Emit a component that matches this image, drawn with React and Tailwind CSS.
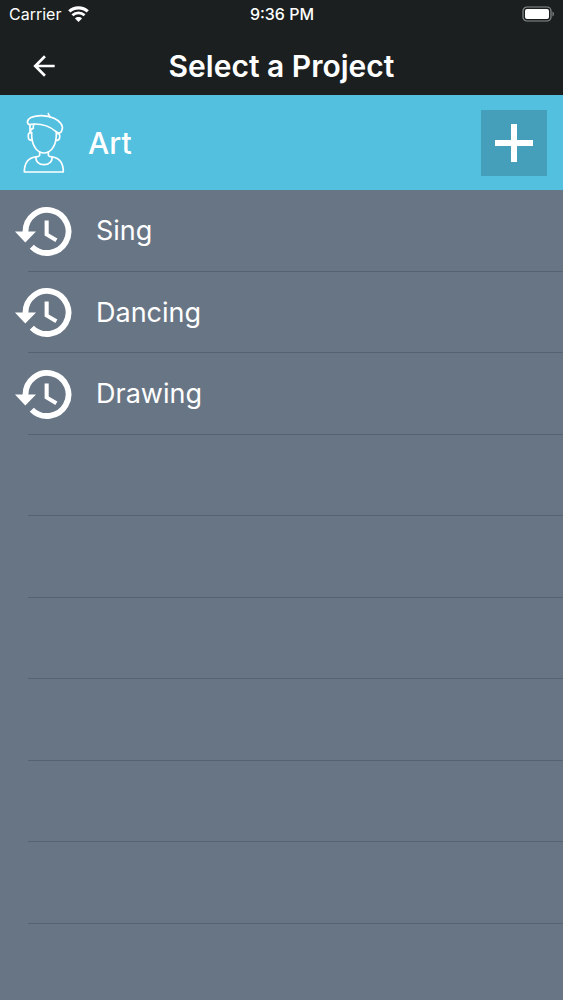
import { MdArrowBack } from "react-icons/md";

const slots = ["Sing", "Dancing", "Drawing", "", "", "", "", "", ""];

function WifiIcon() {
  return (
    <svg viewBox="0 0 66 50" className="h-4 w-[21px]" fill="none" stroke="white" aria-hidden="true">
      <path d="M4 17 C20 2 46 2 62 17" strokeWidth="10" />
      <path d="M14 29 C25 19 41 19 52 29" strokeWidth="9" />
      <path d="M33 50 L22 39 C28 33 38 33 44 39 Z" fill="white" stroke="none" />
    </svg>
  );
}

function BatteryIcon() {
  return (
    <svg viewBox="0 0 34 16" className="h-4 w-[34px]" aria-hidden="true">
      <rect x="2" y="1" width="28" height="14" rx="4" fill="none" stroke="#8b8f90" strokeWidth="1.2" />
      <rect x="4" y="3" width="24" height="10" rx="2" fill="white" />
      <path d="M31.500 5.500 C33.300 6.200 33.300 9.800 31.500 10.500 Z" fill="#8b8f90" />
    </svg>
  );
}

function HistoryIcon() {
  return (
    <svg viewBox="0 0 57 50" className="h-[50px] w-[57px]" aria-hidden="true">
      <path d="M10.500 26 V24.500 A21.500 21.500 0 1 1 16.800 39.700" fill="none" stroke="white" strokeWidth="5.800" />
      <path d="M0 24.500 H21 L10.300 35.500 Z" fill="white" />
      <path d="M29.600 13.500 H33.700 V26.400 L42.400 31.500 L40.400 34.900 L29.600 28.600 Z" fill="white" />
    </svg>
  );
}

function ArtistIcon() {
  return (
    <svg
      viewBox="0 0 162 210"
      className="h-[70px] w-[54px]"
      fill="none"
      stroke="white"
      strokeWidth="5"
      strokeLinecap="round"
      strokeLinejoin="round"
      aria-hidden="true"
    >
      <path d="M91 17 C92 21 94 24 97 27" />
      <path d="M31 49 C24 39 32 28 50 25 C70 21 91 23 108 31 C126 39 137 53 132 66 C130 76 121 78 113 70 C96 55 73 48 50 48 C40 48 34 51 31 49 Z" />
      <path d="M36 50 V73 M48 49 C45 54 45 58 46 61 C40 62 37 67 37 73" />
      <path d="M41 73 C40 95 44 111 54 123 C61 131 69 135 78 135 C87 135 95 131 102 123 C112 111 116 95 115 72" />
      <path d="M39 75 C32 73 30 78 31 86 C31 94 34 97 41 96" />
      <path d="M118 76 C125 77 126 82 125 89 C124 95 121 98 114 97" />
      <path d="M65 132 V141 C65 145 61 146 52 147 C31 150 19 163 19 192 H136 C136 163 124 150 103 147 C94 146 91 145 91 141 V132" />
      <path d="M53 147 C54 162 64 170 78 170 C92 170 102 162 103 147" />
    </svg>
  );
}

export default function App() {
  return (
    <div className="flex min-h-screen flex-col bg-[#687585] font-['Inter',sans-serif] text-white">
      <header className="bg-[#1b1f20]">
        <div className="grid h-7 grid-cols-3 items-center pr-2 pl-[9px] text-base">
          <div className="flex items-center gap-[7px]">
            <span>Carrier</span>
            <WifiIcon />
          </div>
          <span className="text-center font-medium">9:36 PM</span>
          <div className="flex justify-end">
            <BatteryIcon />
          </div>
        </div>
        <div className="grid h-[67px] grid-cols-[64px_1fr_64px] items-center pt-2">
          <button type="button" aria-label="Back" className="flex justify-end pr-1">
            <MdArrowBack className="size-8" />
          </button>
          <h1 className="text-center text-3xl font-semibold">Select a Project</h1>
        </div>
      </header>
      <section className="flex h-[95px] items-center bg-[#53c0df] pr-4 pl-[18px]">
        <ArtistIcon />
        <h2 className="ml-4 flex-1 text-3xl font-medium">Art</h2>
        <button type="button" aria-label="Add project" className="flex size-[66px] items-center justify-center bg-[#459fbb]">
          <svg viewBox="0 0 38 38" className="size-[38px]" fill="white" aria-hidden="true">
            <path d="M16 0h6v16h16v6H22v16h-6V22H0v-6h16z" />
          </svg>
        </button>
      </section>
      <ul>
        {slots.map((name, i) => (
          <li key={i} className="flex h-[82px] flex-col even:h-[81px]">
            <div className="flex flex-1 items-center pt-0.5 pl-[15px]">
              {name && (
                <button type="button" className="flex items-center gap-6 text-[27px]">
                  <HistoryIcon />
                  <span>{name}</span>
                </button>
              )}
            </div>
            <div className="ml-7 h-px bg-[#56626f]" />
          </li>
        ))}
      </ul>
    </div>
  );
}
